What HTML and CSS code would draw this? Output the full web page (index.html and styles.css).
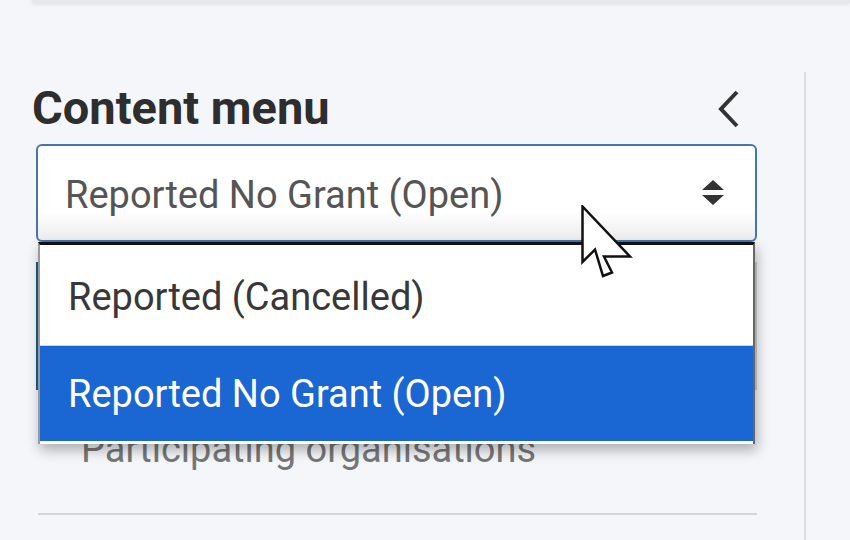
FILE: index.html
```html
<!DOCTYPE html>
<html>
<head>
<meta charset="utf-8">
<link rel="stylesheet" href="styles.css">
</head>
<body>
<div class="topcard"></div>
<div class="layout">
  <aside class="sidebar">
    <div class="title-row">
      <h2 class="title">Content menu</h2>
      <svg class="chevron" width="30" height="40" viewBox="0 0 30 40"><path d="M23 3 L7 20 L23 37" fill="none" stroke="#333" stroke-width="4"/></svg>
    </div>
    <div class="select-wrap">
      <div class="select">
        <span class="select-value">Reported No Grant (Open)</span>
        <svg class="arrows" width="24" height="26" viewBox="0 0 24 26"><path d="M1 10 L12 0 L23 10 Z M1 15 L12 25 L23 15 Z" fill="#333"/></svg>
      </div>
      <div class="dropdown">
        <div class="option">Reported (Cancelled)</div>
        <div class="option selected">Reported No Grant (Open)</div>
      </div>
    </div>
    <nav class="nav">
      <div class="nav-item active"></div>
      <div class="nav-item">Participating organisations</div>
    </nav>
  </aside>
  <main class="main"></main>
</div>
<svg class="cursor" width="52" height="76" viewBox="0 0 52 76"><path d="M1.5 1.5 L1.5 57 L14 44.5 L22 71 L31 67.5 L23 51.5 L49 51.5 Z" fill="#fff" stroke="#111" stroke-width="2.5" stroke-linejoin="miter"/></svg>
</body>
</html>
```

FILE: styles.css
```css
html, body {
  margin: 0;
  padding: 0;
  height: 100%;
}
body {
  background: #f5f6fa;
  font-family: Roboto, "Liberation Sans", sans-serif;
  overflow: hidden;
  position: relative;
}
.topcard {
  height: 3px;
  margin-left: 32px;
  background: #e6e7ec;
  box-shadow: 0 1px 4px rgba(0, 0, 0, 0.12);
}
.layout {
  display: flex;
  margin-top: 69px;
  height: 468px;
}
.sidebar {
  width: 804px;
  box-sizing: border-box;
  padding: 9px 47px 0 36px;
  flex-shrink: 0;
}
.main {
  flex: 1;
  border-left: 2px solid #dcdde1;
}
.title-row {
  display: flex;
  align-items: center;
  justify-content: space-between;
  height: 54px;
}
.title {
  margin: 0 0 0 -4px;
  font-size: 47px;
  line-height: 54px;
  font-weight: 700;
  color: #2e2e2e;
  letter-spacing: 0;
}
.chevron {
  margin-right: 13px;
  margin-top: 2px;
}
.select-wrap {
  position: relative;
  margin-top: 9px;
}
.select {
  height: 98px;
  box-sizing: border-box;
  border: 2px solid #4474b4;
  border-radius: 6px;
  background: linear-gradient(to bottom, #ffffff 0%, #ffffff 70%, #ececec 100%);
  display: flex;
  align-items: center;
  justify-content: space-between;
  padding: 0 30px 0 27px;
}
.select-value {
  font-size: 38px;
  line-height: 44px;
  color: #555;
  margin-top: 4px;
}
.dropdown {
  position: absolute;
  left: 2px;
  right: 2px;
  top: 98px;
  background: #fff;
  border-top: 3px solid #111;
  border-left: 2px solid #9a9a9a;
  border-right: 2px solid #666;
  padding-bottom: 3px;
  box-shadow: 2px 6px 12px rgba(0, 0, 0, 0.3);
  z-index: 2;
}
.option {
  font-size: 38px;
  line-height: 44px;
  padding: 30px 28px 26px;
  color: #383838;
}
.option.selected {
  background: #1a66d2;
  color: #fff;
  border-top: 1px solid #bcd4f4;
  padding: 26px 28px 25px;
}
.nav {
  margin-top: 20px;
}
.nav-item {
  font-size: 38px;
  line-height: 44px;
  color: #777;
}
.nav-item.active {
  height: 128px;
  box-sizing: border-box;
  border-left: 4px solid #1c5a7e;
  border-right: 2px solid #d0d0d0;
  background: #fff;
}
.nav-item:not(.active) {
  padding: 37px 0 42px 43px;
  border-bottom: 2px solid #d6d6d6;
  margin-left: 2px;
}
.cursor {
  position: absolute;
  left: 581px;
  top: 205px;
  z-index: 5;
}
```
